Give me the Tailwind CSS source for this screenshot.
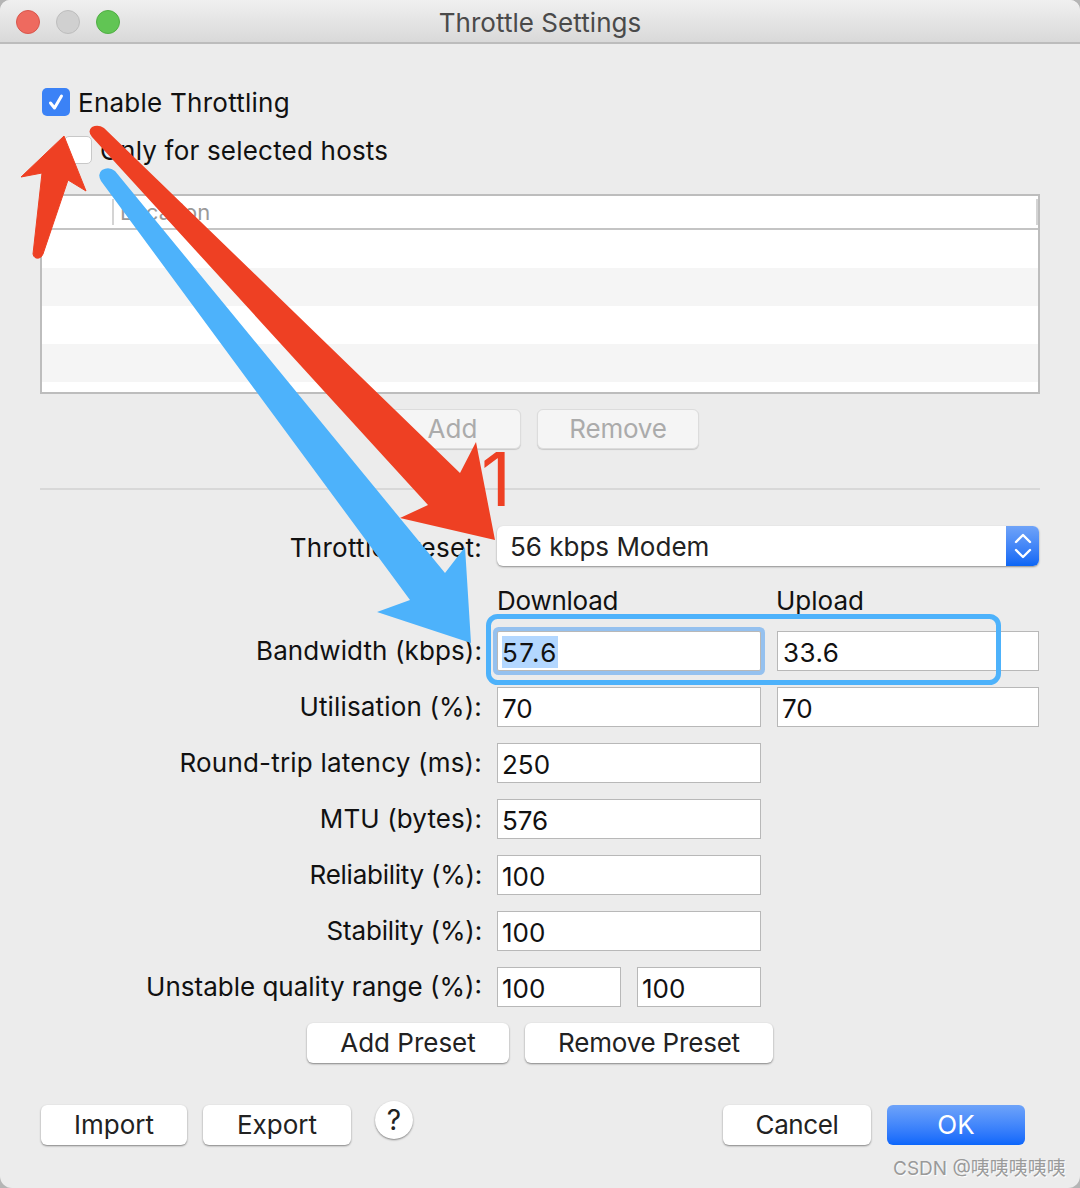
<!DOCTYPE html>
<html lang="en">
<head>
    <meta charset="UTF-8">
    <meta name="viewport" content="width=device-width, initial-scale=1.0">
    <title>Throttle Settings</title>
    <script src="https://cdn.jsdelivr.net/npm/@tailwindcss/browser@4"></script>
</head>
<body class="bg-[#b5b5b5]">
    <div class="relative w-[1080px] h-[1188px] overflow-hidden rounded-t-[10px] rounded-b-[12px] bg-[#ececec] font-['Inter','Noto_Sans_CJK_SC',sans-serif] text-[26px] leading-[32px] text-[#111]">
        <!-- Title bar -->
        <header class="relative flex items-center justify-center h-[44px] bg-gradient-to-b from-[#f0f0f0] to-[#d9d9d9] border-b-2 border-[#bcbcbc]">
            <div class="absolute left-[16px] top-[10px] flex gap-[16px]">
                <span class="w-[24px] h-[24px] rounded-full bg-[#ee6a5f] border border-[#d8564c]"></span>
                <span class="w-[24px] h-[24px] rounded-full bg-[#d0d0d0] border border-[#bdbdbd]"></span>
                <span class="w-[24px] h-[24px] rounded-full bg-[#61c554] border border-[#50ae44]"></span>
            </div>
            <h1 class="pt-[3px] text-[26px] tracking-[0.05px] text-[#4a4a4a]">Throttle Settings</h1>
        </header>

        <main class="px-[40px]">
            <!-- Checkboxes -->
            <label class="flex items-center gap-[8px] mt-[44px] ml-[2px] h-[28px]">
                <span class="flex items-center justify-center w-[28px] h-[28px] rounded-[5px] bg-[#3b82f6]">
                    <svg width="20" height="20" viewBox="0 0 20 20" fill="none" stroke="#fff" stroke-width="3" stroke-linecap="round" stroke-linejoin="round"><path d="M4.500 11l4 5 7-12"/></svg>
                </span>
                <span class="pt-[2px] tracking-[0.25px]">Enable Throttling</span>
            </label>
            <label class="flex items-center gap-[8px] mt-[20px] ml-[24px] h-[28px]">
                <span class="w-[28px] h-[28px] rounded-[5px] bg-white border border-[#c8c8c8]"></span>
                <span class="pt-[2px] tracking-[0.2px]">Only for selected hosts</span>
            </label>

            <!-- Hosts table -->
            <div class="mt-[30px] h-[200px] border-2 border-[#bdbdbd] bg-white">
                <div class="flex items-center h-[34px] border-b-2 border-[#c4c4c4] text-[22px] text-[#9a9a9a]">
                    <div class="w-[72px] h-[26px] border-r-2 border-[#d4d4d4]"></div>
                    <div class="flex-1 pl-[6px] tracking-[0.1px]">Location</div>
                    <div class="w-[2px] h-[26px] bg-[#d4d4d4]"></div>
                </div>
                <div class="h-[38px] bg-white"></div>
                <div class="h-[38px] bg-[#f5f5f5]"></div>
                <div class="h-[38px] bg-white"></div>
                <div class="h-[38px] bg-[#f5f5f5]"></div>
            </div>

            <div class="flex justify-center gap-[16px] mt-[15px]">
                <button class="w-[140px] h-[40px] pl-[3px] rounded-[6px] bg-[#f5f5f5] border border-[#dcdcdc] shadow-[0_1px_1px_rgba(0,0,0,0.15)] text-[#ababab]">Add</button>
                <button class="w-[162px] h-[40px] rounded-[6px] bg-[#f5f5f5] border border-[#dcdcdc] shadow-[0_1px_1px_rgba(0,0,0,0.15)] tracking-[-0.2px] text-[#ababab]">Remove</button>
            </div>

            <hr class="mt-[39px] border-t-2 border-[#d8d8d8]">

            <!-- Preset form -->
            <section class="mt-[36px] flex flex-col gap-[16px]">
                <div class="flex items-center gap-[15px] h-[40px]">
                    <span class="w-[442px] pt-[3px] tracking-[0.3px] text-right">Throttle preset:</span>
                    <div class="flex w-[542px] h-[40px] rounded-[6px] bg-white shadow-[0_1px_2px_rgba(0,0,0,0.4)]">
                        <span class="flex-1 pl-[13px] pt-[1px] leading-[40px] text-[#222]">56 kbps Modem</span>
                        <span class="flex items-center justify-center w-[33px] rounded-r-[6px] bg-gradient-to-b from-[#6fa3f8] to-[#0a66f5]">
                            <svg width="20" height="30" viewBox="0 0 20 30" fill="none" stroke="#fff" stroke-width="2.4" stroke-linecap="round" stroke-linejoin="round"><path d="M3 11l7-7 7 7M3 19l7 7 7-7"/></svg>
                        </span>
                    </div>
                </div>

                <div class="flex items-start h-[33px] pt-[3px] pl-[457px]">
                    <span class="w-[280px] tracking-[-0.25px]">Download</span>
                    <span class="-ml-[1px]">Upload</span>
                </div>

                <div class="flex items-center h-[40px]">
                    <span class="w-[442px] tracking-[0.1px] text-right">Bandwidth (kbps):</span>
                    <div class="w-[264px] ml-[15px] h-[40px] pl-[4px] bg-white border border-[#b8b8b8] shadow-[0_0_0_4px_#95c1ef] rounded-[2px]"><span class="inline-block h-[32px] leading-[33px] mt-[4px] align-top tracking-[1.4px] bg-[#b3d7ff]">57.6</span></div>
                    <div class="w-[262px] ml-[16px] h-[40px] pl-[5px] leading-[42px] tracking-[0.5px] bg-white border border-[#b8b8b8]">33.6</div>
                </div>
                <div class="flex items-center h-[40px]">
                    <span class="w-[442px] tracking-[0.15px] text-right">Utilisation (%):</span>
                    <div class="w-[264px] ml-[15px] h-[40px] pl-[4px] leading-[42px] bg-white border border-[#b8b8b8]">70</div>
                    <div class="w-[262px] ml-[16px] h-[40px] pl-[4px] leading-[42px] bg-white border border-[#b8b8b8]">70</div>
                </div>
                <div class="flex items-center gap-[15px] h-[40px]">
                    <span class="w-[442px] tracking-[0.2px] text-right">Round-trip latency (ms):</span>
                    <div class="w-[264px] h-[40px] pl-[4px] leading-[42px] bg-white border border-[#b8b8b8]">250</div>
                </div>
                <div class="flex items-center gap-[15px] h-[40px]">
                    <span class="w-[442px] tracking-[0.1px] text-right">MTU (bytes):</span>
                    <div class="w-[264px] h-[40px] pl-[4px] leading-[42px] bg-white border border-[#b8b8b8]">576</div>
                </div>
                <div class="flex items-center gap-[15px] h-[40px]">
                    <span class="w-[442px] tracking-[-0.25px] text-right">Reliability (%):</span>
                    <div class="w-[264px] h-[40px] pl-[4px] leading-[42px] bg-white border border-[#b8b8b8]">100</div>
                </div>
                <div class="flex items-center gap-[15px] h-[40px]">
                    <span class="w-[442px] tracking-[-0.15px] text-right">Stability (%):</span>
                    <div class="w-[264px] h-[40px] pl-[4px] leading-[42px] bg-white border border-[#b8b8b8]">100</div>
                </div>
                <div class="flex items-center gap-[15px] h-[40px]">
                    <span class="w-[442px] text-right">Unstable quality range (%):</span>
                    <div class="w-[124px] h-[40px] pl-[4px] leading-[42px] bg-white border border-[#b8b8b8]">100</div>
                    <div class="w-[124px] h-[40px] ml-[1px] pl-[4px] leading-[42px] bg-white border border-[#b8b8b8]">100</div>
                </div>
                <div class="flex justify-center gap-[16px]">
                    <button class="w-[202px] h-[40px] rounded-[6px] bg-white shadow-[0_1px_2px_rgba(0,0,0,0.45)] text-[#222]">Add Preset</button>
                    <button class="w-[248px] h-[40px] rounded-[6px] bg-white shadow-[0_1px_2px_rgba(0,0,0,0.45)] tracking-[-0.2px] text-[#222]">Remove Preset</button>
                </div>
            </section>

            <!-- Footer buttons -->
            <footer class="flex items-start mt-[38px] ml-[1px] pr-[15px]">
                <button class="mt-[4px] w-[146px] h-[40px] rounded-[6px] bg-white shadow-[0_1px_2px_rgba(0,0,0,0.45)] text-[#222]">Import</button>
                <button class="mt-[4px] ml-[16px] w-[148px] h-[40px] rounded-[6px] bg-white shadow-[0_1px_2px_rgba(0,0,0,0.45)] text-[#222]">Export</button>
                <button class="ml-[24px] w-[38px] h-[38px] rounded-full bg-white shadow-[0_1px_2px_rgba(0,0,0,0.45)] text-[28px] text-[#222] leading-[34px]">?</button>
                <button class="mt-[4px] ml-auto w-[148px] h-[40px] rounded-[6px] bg-white shadow-[0_1px_2px_rgba(0,0,0,0.45)] tracking-[-0.4px] text-[#222]">Cancel</button>
                <button class="mt-[4px] ml-[16px] w-[138px] h-[40px] rounded-[6px] bg-gradient-to-b from-[#6ea3f9] to-[#0a66fb] text-white">OK</button>
            </footer>
        </main>

        <!-- Annotations drawn over the dialog -->
        <svg class="absolute left-0 top-0 pointer-events-none" width="1080" height="1188" viewBox="0 0 1080 1188">
            <path fill="#ee4023" stroke="#ee4023" stroke-width="1" stroke-linejoin="round" d="M64 136L21 177L42 173L33 254Q34 259 39 258Q42 257 43 254L68 180L86 191Z"/>
            <path fill="#4db2fb" d="M101 181Q97 174 102 170Q109 166 115 171L445 573L465 547L471 643L377 612L410 600Z"/>
            <path fill="#ee4023" d="M92 137Q87 131 92 127Q98 124 104 128L460 473L476 442L495 540L400 518L428 505Z"/>
            <rect x="488.500" y="616.500" width="510" height="66" rx="9" fill="none" stroke="#4db2fb" stroke-width="5"/>
        </svg>
        <span class="absolute left-[481px] top-[439px] text-[74px] leading-[80px] text-[#ee4023]">1</span>

        <!-- Watermark -->
        <span class="absolute left-[893px] top-[1157px] text-[19px] leading-[24px] text-[#9a9a9a] [text-shadow:1px_1px_1px_#fff]">CSDN @咦咦咦咦咦</span>
    </div>
</body>
</html>
